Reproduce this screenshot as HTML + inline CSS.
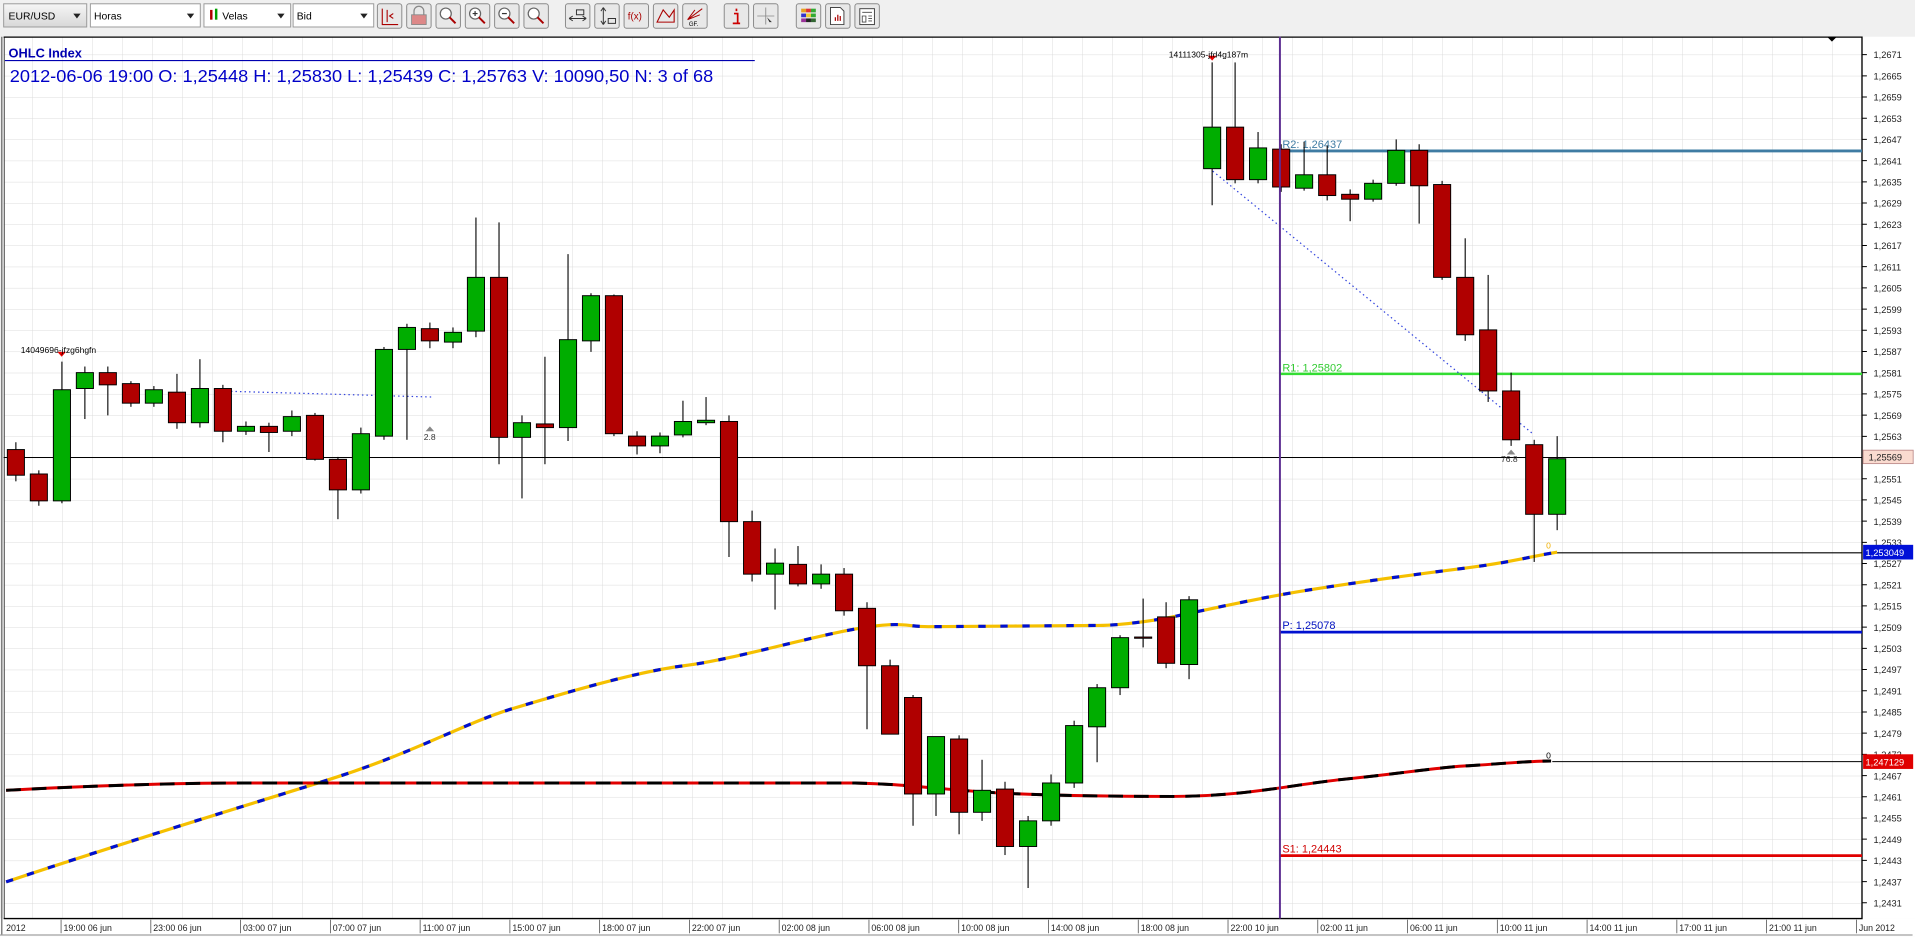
<!DOCTYPE html>
<html><head><meta charset="utf-8"><style>
html,body{margin:0;padding:0;background:#f0f0f0;overflow:hidden}
svg{display:block}
text{font-family:"Liberation Sans",sans-serif}
.r{fill:#b00000;stroke:#000;stroke-width:.8}
.g{fill:#00ad00;stroke:#000;stroke-width:.8}
.w{stroke:#000;stroke-width:.9}
.pl text{font-size:7.6px;fill:#222}
.tl text{font-size:7.2px;fill:#222}
.btn{fill:#e8e8e8;stroke:#8a8a8a;stroke-width:.8}
</style></head><body>
<svg width="1915" height="937" viewBox="0 0 1568 767" xmlns="http://www.w3.org/2000/svg">
<defs>
<pattern id="grid" patternUnits="userSpaceOnUse" x="51" y="44.6" width="24.56" height="17.367">
<line x1="0" y1="0" x2="0" y2="17.367" stroke="#dcdcdc" stroke-width=".8"/>
<line x1="0" y1="0" x2="24.56" y2="0" stroke="#dcdcdc" stroke-width=".8"/>
</pattern>
<linearGradient id="dd" x1="0" y1="0" x2="0" y2="1"><stop offset="0" stop-color="#f6f6f6"/><stop offset="1" stop-color="#d8d8d8"/></linearGradient>
</defs>
<rect x="0" y="0" width="1568" height="767" fill="#f0f0f0"/>
<!-- toolbar -->
<rect x="3" y="3" width="68" height="19" fill="url(#dd)" stroke="#9a9a9a" stroke-width=".8"/>
<text x="7" y="16" font-size="8.5">EUR/USD</text><path d="M60 11h6l-3 4z" fill="#222"/>
<rect x="74" y="3" width="90" height="19" fill="#fff" stroke="#9a9a9a" stroke-width=".8"/>
<text x="77" y="16" font-size="8.5">Horas</text><path d="M153 11h6l-3 4z" fill="#222"/>
<rect x="167" y="3" width="71" height="19" fill="#fff" stroke="#9a9a9a" stroke-width=".8"/>
<rect x="172" y="8" width="2" height="8" fill="#b00000"/><rect x="176" y="7" width="2" height="9" fill="#00a000"/>
<text x="182" y="16" font-size="8.5">Velas</text><path d="M227 11h6l-3 4z" fill="#222"/>
<rect x="240" y="3" width="66" height="19" fill="#fff" stroke="#9a9a9a" stroke-width=".8"/>
<text x="243" y="16" font-size="8.5">Bid</text><path d="M295 11h6l-3 4z" fill="#222"/>
<g>
<rect class="btn" x="309" y="3" width="20" height="20" rx="2"/><path d="M313 7v13h13M317 8v10M322 11l-3 2 3 2" stroke="#a00" fill="none" stroke-width=".9"/>
<rect class="btn" x="333" y="3" width="20" height="20" rx="2"/><rect x="337" y="12" width="12" height="8" fill="#d88" stroke="#888" stroke-width=".7"/><path d="M339 12v-3a4 4 0 0 1 8 0v3" stroke="#888" fill="none"/>
<rect class="btn" x="357" y="3" width="20" height="20" rx="2"/><circle cx="365" cy="11" r="4.5" fill="#fff" stroke="#666"/><path d="M368 14l5 5" stroke="#a00" stroke-width="1.6"/>
<rect class="btn" x="381" y="3" width="20" height="20" rx="2"/><circle cx="389" cy="11" r="4.5" fill="#fff" stroke="#666"/><path d="M392 14l5 5" stroke="#a00" stroke-width="1.6"/><path d="M387 11h4M389 9v4" stroke="#333"/>
<rect class="btn" x="405" y="3" width="20" height="20" rx="2"/><circle cx="413" cy="11" r="4.5" fill="#fff" stroke="#666"/><path d="M416 14l5 5" stroke="#a00" stroke-width="1.6"/><path d="M411 11h4" stroke="#333"/>
<rect class="btn" x="429" y="3" width="20" height="20" rx="2"/><circle cx="437" cy="11" r="4.5" fill="#fff" stroke="#666"/><path d="M440 14l5 5" stroke="#a00" stroke-width="1.6"/>
<rect class="btn" x="463" y="3" width="20" height="20" rx="2"/><path d="M466 15h14M466 15l3-2M466 15l3 2M480 15l-3-2M480 15l-3 2M472 8h6v4h-6z" stroke="#333" fill="none" stroke-width=".8"/>
<rect class="btn" x="487" y="3" width="20" height="20" rx="2"/><path d="M494 6v14M494 6l-2 3M494 6l2 3M494 20l-2-3M494 20l2-3M498 15h6v4h-6z" stroke="#333" fill="none" stroke-width=".8"/>
<rect class="btn" x="511" y="3" width="20" height="20" rx="2"/><text x="514" y="16" font-size="8" fill="#a00">f(x)</text>
<rect class="btn" x="535" y="3" width="20" height="20" rx="2"/><path d="M538 18l5-10 5 6 4-6v10z" stroke="#a00" fill="none" stroke-width=".9"/>
<rect class="btn" x="559" y="3" width="20" height="20" rx="2"/><path d="M563 16l12-9M563 16l10-4M563 16l6-8" stroke="#a00" fill="none" stroke-width=".8"/><text x="564" y="21" font-size="5">GF.</text>
<rect class="btn" x="593" y="3" width="20" height="20" rx="2"/><path d="M603 7v2M601 11h3v8M600 19h6" stroke="#c00" stroke-width="1.4" fill="none"/>
<rect class="btn" x="617" y="3" width="20" height="20" rx="2"/><path d="M627 6v14M620 13h14" stroke="#888" stroke-width=".7"/><path d="M628 14l4 4-2 0 1 2z" fill="#333"/>
<rect class="btn" x="652" y="3" width="20" height="20" rx="2"/><rect x="656" y="7" width="4" height="3" fill="#e8a020"/><rect x="660" y="7" width="4" height="3" fill="#d33"/><rect x="664" y="7" width="4" height="3" fill="#3a3"/><rect x="656" y="11" width="4" height="3" fill="#33c"/><rect x="660" y="11" width="4" height="3" fill="#ec3"/><rect x="664" y="11" width="4" height="3" fill="#3a3"/><rect x="656" y="15" width="4" height="3" fill="#939"/><rect x="660" y="15" width="4" height="3" fill="#222"/><rect x="664" y="15" width="4" height="3" fill="#363"/>
<rect class="btn" x="676" y="3" width="20" height="20" rx="2"/><path d="M680 6h8l3 3v11h-11z" fill="#fff" stroke="#444" stroke-width=".8"/><path d="M684 17v-3M686 17v-5M688 17v-4" stroke="#a00"/>
<rect class="btn" x="700" y="3" width="20" height="20" rx="2"/><rect x="704" y="7" width="12" height="13" fill="#fff" stroke="#444" stroke-width=".8"/><path d="M706 10h8M706 13h3v5h-3zM711 13h3M711 15h3M711 17h3" stroke="#444" fill="none" stroke-width=".7"/>
</g>
<!-- chart area -->
<rect x="3" y="30" width="1521.6" height="722" fill="#fff"/>
<rect x="3" y="30" width="1521.6" height="722" fill="url(#grid)"/>
<rect x="1524.6" y="30" width="43.4" height="722" fill="#fff"/>
<rect x="0" y="752" width="1568" height="15" fill="#fff"/>
<path d="M1.5 30V765M3.5 30V752" stroke="#444" stroke-width=".8"/>
<path d="M3 30.3H1524.6V752H3" stroke="#000" stroke-width="1.1" fill="none"/>
<path d="M0 765.5H1566" stroke="#888" stroke-width=".8"/>
<path d="M1496 30h8l-4 4z" fill="#000"/>
<!-- header -->
<text x="7" y="47" font-size="10.5" font-weight="bold" fill="#0000b0">OHLC Index</text>
<path d="M4 49.5H618" stroke="#0000b0" stroke-width=".9"/>
<text x="8" y="67" font-size="14" fill="#0000c8" textLength="576" lengthAdjust="spacingAndGlyphs">2012-06-06 19:00 O: 1,25448 H: 1,25830 L: 1,25439 C: 1,25763 V: 10090,50 N: 3 of 68</text>
<!-- MAs -->
<path d="M5 722 C100 690 200 660 270 638 S380 592 420 580 S520 550 560 545 S660 522 700 515 S740 513 760 513 S880 512 900 512 S950 507 960 505 S1010 494 1048 487 S1160 470 1200 465 S1250 456 1275 452" fill="none" stroke="#f5c000" stroke-width="2.6"/>
<path d="M5 722 C100 690 200 660 270 638 S380 592 420 580 S520 550 560 545 S660 522 700 515 S740 513 760 513 S880 512 900 512 S950 507 960 505 S1010 494 1048 487 S1160 470 1200 465 S1250 456 1275 452" fill="none" stroke="#0010d0" stroke-width="2.6" stroke-dasharray="6 12"/>
<path d="M5 647 C80 643 150 641 200 641 L700 641 C740 642 760 645 800 648 S900 652 960 652 S1060 642 1100 638 S1180 628 1200 627 S1250 623 1270 623" fill="none" stroke="#e00000" stroke-width="2.4"/>
<path d="M5 647 C80 643 150 641 200 641 L700 641 C740 642 760 645 800 648 S900 652 960 652 S1060 642 1100 638 S1180 628 1200 627 S1250 623 1270 623" fill="none" stroke="#000" stroke-width="2.4" stroke-dasharray="12 9"/>
<!-- horizontal lines -->
<path d="M3 374.5H1524.6" stroke="#000" stroke-width=".9"/>
<path d="M1275 452.5H1524.6M1271 623.5H1524.6" stroke="#000" stroke-width=".9"/>
<path d="M1048 123.5H1524.6" stroke="#3f7ca3" stroke-width="2.4"/>
<path d="M1048 306H1524.6" stroke="#33dd33" stroke-width="2"/>
<path d="M1048 517.5H1524.6" stroke="#0010d0" stroke-width="2.2"/>
<path d="M1048 700.5H1524.6" stroke="#e00000" stroke-width="2.2"/>
<text x="1050" y="121" font-size="9" fill="#3f7ca3">R2: 1,26437</text>
<text x="1050" y="304" font-size="9" fill="#33cc33">R1: 1,25802</text>
<text x="1050" y="515" font-size="9" fill="#0010c0">P: 1,25078</text>
<text x="1050" y="698" font-size="9" fill="#d00000">S1: 1,24443</text>
<text x="1266" y="449" font-size="7" fill="#f0b000">0</text>
<text x="1266" y="621" font-size="7" fill="#000">0</text>
<!-- dotted -->
<path d="M178 320L355 325" stroke="#3344dd" stroke-width="1" stroke-dasharray="1.2 2.5"/>
<path d="M993 140L1255 355" stroke="#3344dd" stroke-width="1" stroke-dasharray="1.2 2.5"/>
<!-- candles -->
<g>
<line class="w" x1="13" x2="13" y1="362" y2="394"/><rect class="r" x="6" width="14" y="368" height="21"/>
<line class="w" x1="31.8" x2="31.8" y1="385" y2="414"/><rect class="r" x="24.8" width="14" y="388" height="22"/>
<line class="w" x1="50.7" x2="50.7" y1="296" y2="412"/><rect class="g" x="43.7" width="14" y="319" height="91"/>
<line class="w" x1="69.5" x2="69.5" y1="300" y2="343"/><rect class="g" x="62.5" width="14" y="305" height="13"/>
<line class="w" x1="88.3" x2="88.3" y1="300" y2="340"/><rect class="r" x="81.3" width="14" y="305" height="10"/>
<line class="w" x1="107.2" x2="107.2" y1="312" y2="333"/><rect class="r" x="100.2" width="14" y="314" height="16"/>
<line class="w" x1="126" x2="126" y1="316" y2="333"/><rect class="g" x="119" width="14" y="319" height="11"/>
<line class="w" x1="144.9" x2="144.9" y1="306" y2="351"/><rect class="r" x="137.9" width="14" y="321" height="25"/>
<line class="w" x1="163.7" x2="163.7" y1="294" y2="350"/><rect class="g" x="156.7" width="14" y="318" height="28"/>
<line class="w" x1="182.5" x2="182.5" y1="315" y2="362"/><rect class="r" x="175.5" width="14" y="318" height="35"/>
<line class="w" x1="201.4" x2="201.4" y1="345" y2="356"/><rect class="g" x="194.4" width="14" y="349" height="4"/>
<line class="w" x1="220.2" x2="220.2" y1="346" y2="370"/><rect class="r" x="213.2" width="14" y="349" height="5"/>
<line class="w" x1="239" x2="239" y1="336" y2="357"/><rect class="g" x="232" width="14" y="341" height="12"/>
<line class="w" x1="257.9" x2="257.9" y1="338" y2="377"/><rect class="r" x="250.9" width="14" y="340" height="36"/>
<line class="w" x1="276.7" x2="276.7" y1="374" y2="425"/><rect class="r" x="269.7" width="14" y="376" height="25"/>
<line class="w" x1="295.5" x2="295.5" y1="350" y2="404"/><rect class="g" x="288.5" width="14" y="355" height="46"/>
<line class="w" x1="314.4" x2="314.4" y1="284" y2="360"/><rect class="g" x="307.4" width="14" y="286" height="71"/>
<line class="w" x1="333.2" x2="333.2" y1="265" y2="360"/><rect class="g" x="326.2" width="14" y="268" height="18"/>
<line class="w" x1="352" x2="352" y1="264" y2="285"/><rect class="r" x="345" width="14" y="269" height="10"/>
<line class="w" x1="370.9" x2="370.9" y1="268" y2="285"/><rect class="g" x="363.9" width="14" y="272" height="8"/>
<line class="w" x1="389.7" x2="389.7" y1="178" y2="276"/><rect class="g" x="382.7" width="14" y="227" height="44"/>
<line class="w" x1="408.6" x2="408.6" y1="182" y2="380"/><rect class="r" x="401.6" width="14" y="227" height="131"/>
<line class="w" x1="427.4" x2="427.4" y1="340" y2="408"/><rect class="g" x="420.4" width="14" y="346" height="12"/>
<line class="w" x1="446.2" x2="446.2" y1="292" y2="380"/><rect class="r" x="439.2" width="14" y="347" height="3"/>
<line class="w" x1="465.1" x2="465.1" y1="208" y2="361"/><rect class="g" x="458.1" width="14" y="278" height="72"/>
<line class="w" x1="483.9" x2="483.9" y1="240" y2="288"/><rect class="g" x="476.9" width="14" y="242" height="37"/>
<line class="w" x1="502.7" x2="502.7" y1="241" y2="357"/><rect class="r" x="495.7" width="14" y="242" height="113"/>
<line class="w" x1="521.6" x2="521.6" y1="353" y2="372"/><rect class="r" x="514.6" width="14" y="357" height="8"/>
<line class="w" x1="540.4" x2="540.4" y1="354" y2="371"/><rect class="g" x="533.4" width="14" y="357" height="8"/>
<line class="w" x1="559.2" x2="559.2" y1="328" y2="358"/><rect class="g" x="552.2" width="14" y="345" height="11"/>
<line class="w" x1="578.1" x2="578.1" y1="325" y2="348"/><rect class="g" x="571.1" width="14" y="344" height="2"/>
<line class="w" x1="596.9" x2="596.9" y1="340" y2="456"/><rect class="r" x="589.9" width="14" y="345" height="82"/>
<line class="w" x1="615.8" x2="615.8" y1="418" y2="476"/><rect class="r" x="608.8" width="14" y="427" height="43"/>
<line class="w" x1="634.6" x2="634.6" y1="449" y2="499"/><rect class="g" x="627.6" width="14" y="461" height="9"/>
<line class="w" x1="653.4" x2="653.4" y1="447" y2="480"/><rect class="r" x="646.4" width="14" y="462" height="16"/>
<line class="w" x1="672.3" x2="672.3" y1="462" y2="482"/><rect class="g" x="665.3" width="14" y="470" height="8"/>
<line class="w" x1="691.1" x2="691.1" y1="465" y2="504"/><rect class="r" x="684.1" width="14" y="470" height="30"/>
<line class="w" x1="709.9" x2="709.9" y1="493" y2="597"/><rect class="r" x="702.9" width="14" y="498" height="47"/>
<line class="w" x1="728.8" x2="728.8" y1="540" y2="600"/><rect class="r" x="721.8" width="14" y="545" height="56"/>
<line class="w" x1="747.6" x2="747.6" y1="569" y2="676"/><rect class="r" x="740.6" width="14" y="571" height="79"/>
<line class="w" x1="766.4" x2="766.4" y1="603" y2="668"/><rect class="g" x="759.4" width="14" y="603" height="47"/>
<line class="w" x1="785.3" x2="785.3" y1="602" y2="683"/><rect class="r" x="778.3" width="14" y="605" height="60"/>
<line class="w" x1="804.1" x2="804.1" y1="622" y2="672"/><rect class="g" x="797.1" width="14" y="647" height="18"/>
<line class="w" x1="822.9" x2="822.9" y1="640" y2="700"/><rect class="r" x="815.9" width="14" y="646" height="47"/>
<line class="w" x1="841.8" x2="841.8" y1="668" y2="727"/><rect class="g" x="834.8" width="14" y="672" height="21"/>
<line class="w" x1="860.6" x2="860.6" y1="634" y2="676"/><rect class="g" x="853.6" width="14" y="641" height="31"/>
<line class="w" x1="879.5" x2="879.5" y1="590" y2="645"/><rect class="g" x="872.5" width="14" y="594" height="47"/>
<line class="w" x1="898.3" x2="898.3" y1="560" y2="624"/><rect class="g" x="891.3" width="14" y="563" height="32"/>
<line class="w" x1="917.1" x2="917.1" y1="520" y2="569"/><rect class="g" x="910.1" width="14" y="522" height="41"/>
<line class="w" x1="936" x2="936" y1="490" y2="530"/><rect class="r" x="929" width="14" y="521.5" height="1"/>
<line class="w" x1="954.8" x2="954.8" y1="493" y2="547"/><rect class="r" x="947.8" width="14" y="505" height="38"/>
<line class="w" x1="973.6" x2="973.6" y1="488" y2="556"/><rect class="g" x="966.6" width="14" y="491" height="53"/>
<line class="w" x1="992.5" x2="992.5" y1="51" y2="168"/><rect class="g" x="985.5" width="14" y="104" height="34"/>
<line class="w" x1="1011.3" x2="1011.3" y1="51" y2="150"/><rect class="r" x="1004.3" width="14" y="104" height="43"/>
<line class="w" x1="1030.1" x2="1030.1" y1="108" y2="150"/><rect class="g" x="1023.1" width="14" y="121" height="26"/>
<line class="w" x1="1049" x2="1049" y1="118" y2="157"/><rect class="r" x="1042" width="14" y="122" height="31"/>
<line class="w" x1="1067.8" x2="1067.8" y1="116" y2="156"/><rect class="g" x="1060.8" width="14" y="143" height="11"/>
<line class="w" x1="1086.7" x2="1086.7" y1="119" y2="164"/><rect class="r" x="1079.7" width="14" y="143" height="17"/>
<line class="w" x1="1105.5" x2="1105.5" y1="155" y2="181"/><rect class="r" x="1098.5" width="14" y="159" height="4"/>
<line class="w" x1="1124.3" x2="1124.3" y1="147" y2="165"/><rect class="g" x="1117.3" width="14" y="150" height="13"/>
<line class="w" x1="1143.2" x2="1143.2" y1="114" y2="152"/><rect class="g" x="1136.2" width="14" y="123" height="27"/>
<line class="w" x1="1162" x2="1162" y1="118" y2="183"/><rect class="r" x="1155" width="14" y="123" height="29"/>
<line class="w" x1="1180.8" x2="1180.8" y1="148" y2="229"/><rect class="r" x="1173.8" width="14" y="151" height="76"/>
<line class="w" x1="1199.7" x2="1199.7" y1="195" y2="279"/><rect class="r" x="1192.7" width="14" y="227" height="47"/>
<line class="w" x1="1218.5" x2="1218.5" y1="225" y2="329"/><rect class="r" x="1211.5" width="14" y="270" height="50"/>
<line class="w" x1="1237.3" x2="1237.3" y1="305" y2="365"/><rect class="r" x="1230.3" width="14" y="320" height="40"/>
<line class="w" x1="1256.2" x2="1256.2" y1="360" y2="460"/><rect class="r" x="1249.2" width="14" y="364" height="57"/>
<line class="w" x1="1275" x2="1275" y1="357" y2="434"/><rect class="g" x="1268" width="14" y="375.5" height="45.5"/>
</g>
<!-- markers -->
<path d="M47 288h7l-3.5 4z" fill="#e00"/>
<text x="17" y="289" font-size="7" fill="#000">14049696-jfzg6hgfn</text>
<path d="M989 45.5h7l-3.5 4z" fill="#e00"/>
<text x="957" y="47" font-size="7" fill="#000">14111305-jfd4g187m</text>
<path d="M348.5 353h7l-3.5-4z" fill="#888"/>
<text x="347" y="360" font-size="7" fill="#333">2.8</text>
<path d="M1233.8 372h7l-3.5-4z" fill="#888"/>
<text x="1229" y="378" font-size="7" fill="#333">76.8</text>
<!-- vertical line -->
<path d="M1048 30V752" stroke="#5c2d91" stroke-width="1.6"/>
<!-- price axis -->
<g class="pl">
<path d="M1524.6 44.6h4M1524.6 62h4M1524.6 79.3h4M1524.6 96.7h4M1524.6 114h4M1524.6 131.4h4M1524.6 148.8h4M1524.6 166.1h4M1524.6 183.5h4M1524.6 200.9h4M1524.6 218.2h4M1524.6 235.6h4M1524.6 253h4M1524.6 270.3h4M1524.6 287.7h4M1524.6 305h4M1524.6 322.4h4M1524.6 339.8h4M1524.6 357.2h4M1524.6 391.9h4M1524.6 409.2h4M1524.6 426.6h4M1524.6 444h4M1524.6 461.3h4M1524.6 478.7h4M1524.6 496h4M1524.6 513.4h4M1524.6 530.8h4M1524.6 548.1h4M1524.6 565.5h4M1524.6 582.9h4M1524.6 600.2h4M1524.6 617.6h4M1524.6 635h4M1524.6 652.3h4M1524.6 669.7h4M1524.6 687h4M1524.6 704.4h4M1524.6 721.8h4M1524.6 739.1h4" stroke="#000" stroke-width=".8"/>
<text x="1534" y="47.5">1,2671</text><text x="1534" y="65">1,2665</text><text x="1534" y="82.3">1,2659</text><text x="1534" y="99.7">1,2653</text><text x="1534" y="117">1,2647</text><text x="1534" y="134.4">1,2641</text><text x="1534" y="151.8">1,2635</text><text x="1534" y="169.1">1,2629</text><text x="1534" y="186.5">1,2623</text><text x="1534" y="203.9">1,2617</text><text x="1534" y="221.2">1,2611</text><text x="1534" y="238.6">1,2605</text><text x="1534" y="256">1,2599</text><text x="1534" y="273.3">1,2593</text><text x="1534" y="290.7">1,2587</text><text x="1534" y="308">1,2581</text><text x="1534" y="325.4">1,2575</text><text x="1534" y="342.8">1,2569</text><text x="1534" y="360.2">1,2563</text><text x="1534" y="394.9">1,2551</text><text x="1534" y="412.2">1,2545</text><text x="1534" y="429.6">1,2539</text><text x="1534" y="447">1,2533</text><text x="1534" y="464.3">1,2527</text><text x="1534" y="481.7">1,2521</text><text x="1534" y="499">1,2515</text><text x="1534" y="516.4">1,2509</text><text x="1534" y="533.8">1,2503</text><text x="1534" y="551.1">1,2497</text><text x="1534" y="568.5">1,2491</text><text x="1534" y="585.9">1,2485</text><text x="1534" y="603.2">1,2479</text><text x="1534" y="620.6">1,2473</text><text x="1534" y="638">1,2467</text><text x="1534" y="655.3">1,2461</text><text x="1534" y="672.7">1,2455</text><text x="1534" y="690">1,2449</text><text x="1534" y="707.4">1,2443</text><text x="1534" y="724.8">1,2437</text><text x="1534" y="742.1">1,2431</text>
</g>
<rect x="1525.5" y="368.5" width="41" height="11" fill="#fadbd0" stroke="#b88" stroke-width=".7"/>
<text x="1530" y="377" font-size="7.6" fill="#222">1,25569</text>
<rect x="1525.5" y="446" width="41" height="12" fill="#0010d8"/>
<text x="1527.5" y="455" font-size="7.6" fill="#fff">1,253049</text>
<rect x="1525.5" y="617.5" width="41" height="12" fill="#e00000"/>
<text x="1527.5" y="626.5" font-size="7.6" fill="#fff">1,247129</text>
<!-- time axis -->
<g class="tl">
<path d="M50 753v11M123.5 753v11M197 753v11M270.5 753v11M344 753v11M417.5 753v11M491 753v11M564.5 753v11M638 753v11M711.5 753v11M785 753v11M858.5 753v11M932 753v11M1005.5 753v11M1079 753v11M1152.5 753v11M1226 753v11M1299.5 753v11M1373 753v11M1446.5 753v11M1520 753v11" stroke="#444" stroke-width=".6"/>
<text x="5" y="762">2012</text>
<text x="52" y="762">19:00 06 jun</text><text x="125.5" y="762">23:00 06 jun</text><text x="199" y="762">03:00 07 jun</text><text x="272.5" y="762">07:00 07 jun</text><text x="346" y="762">11:00 07 jun</text><text x="419.5" y="762">15:00 07 jun</text><text x="493" y="762">18:00 07 jun</text><text x="566.5" y="762">22:00 07 jun</text><text x="640" y="762">02:00 08 jun</text><text x="713.5" y="762">06:00 08 jun</text><text x="787" y="762">10:00 08 jun</text><text x="860.5" y="762">14:00 08 jun</text><text x="934" y="762">18:00 08 jun</text><text x="1007.5" y="762">22:00 10 jun</text><text x="1081" y="762">02:00 11 jun</text><text x="1154.5" y="762">06:00 11 jun</text><text x="1228" y="762">10:00 11 jun</text><text x="1301.5" y="762">14:00 11 jun</text><text x="1375" y="762">17:00 11 jun</text><text x="1448.5" y="762">21:00 11 jun</text><text x="1522" y="762">Jun 2012</text>
</g>
</svg>
</body></html>
